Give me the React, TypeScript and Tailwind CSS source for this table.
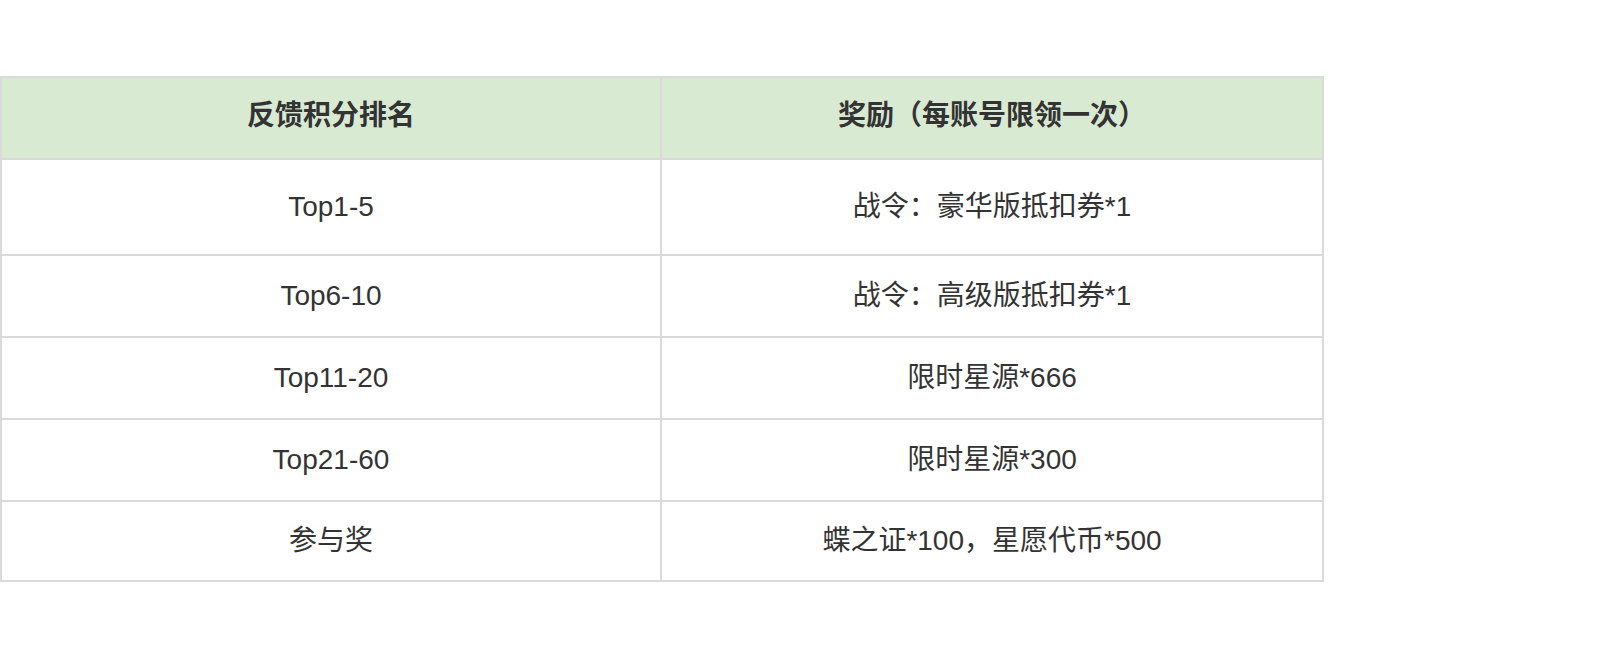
import React from "react";

const rows: { rank: string; reward: string; h: string }[] = [
  { rank: "Top1-5", reward: "战令：豪华版抵扣券*1", h: "h-[96px]" },
  { rank: "Top6-10", reward: "战令：高级版抵扣券*1", h: "h-[82px]" },
  { rank: "Top11-20", reward: "限时星源*666", h: "h-[82px]" },
  { rank: "Top21-60", reward: "限时星源*300", h: "h-[82px]" },
  { rank: "参与奖", reward: "蝶之证*100，星愿代币*500", h: "h-[80px]" },
];

export default function App() {
  return (
    <div
      className="w-[1600px] h-[670px] bg-white pt-[76px] text-[#333333]"
      style={{ fontFamily: '"Liberation Sans", "Noto Sans CJK SC", sans-serif' }}
    >
      <table className="w-[1324px] border-separate border-spacing-0 border border-[#dadada] table-fixed text-[28px] leading-none">
        <colgroup>
          <col className="w-[660px]" />
          <col />
        </colgroup>
        <thead>
          <tr>
            <th className="h-[82px] p-0 pb-[4px] border border-[#dadada] bg-[#d9ead3] font-bold text-center align-middle">
              反馈积分排名
            </th>
            <th className="h-[82px] p-0 pb-[4px] border border-[#dadada] bg-[#d9ead3] font-bold text-center align-middle">
              奖励（每账号限领一次）
            </th>
          </tr>
        </thead>
        <tbody>
          {rows.map((r) => (
            <tr key={r.rank}>
              <td className={`${r.h} p-0 border border-[#dadada] text-center align-middle`}>{r.rank}</td>
              <td className={`${r.h} p-0 border border-[#dadada] text-center align-middle`}>{r.reward}</td>
            </tr>
          ))}
        </tbody>
      </table>
    </div>
  );
}
